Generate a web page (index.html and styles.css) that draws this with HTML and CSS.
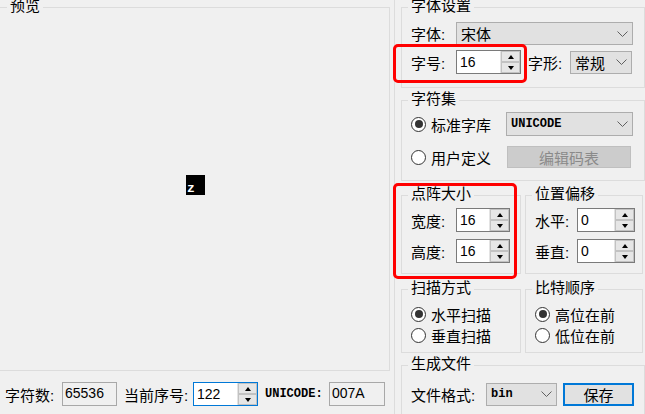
FILE: index.html
```html
<!DOCTYPE html>
<html>
<head>
	<meta charset="utf-8"/>
	<title>字模提取</title>
	<link rel="stylesheet" href="styles.css">
</head>
<body>
<div class="app">
	<div class="left">
		<fieldset class="preview">
			<legend>预览</legend>
			<div class="canvas"><span class="glyph">z</span></div>
		</fieldset>
		<div class="status">
			<span class="lbl w57">字符数:</span>
			<span class="box w55">65536</span>
			<span class="lbl w69">当前序号:</span>
			<span class="spin focus w65"><span class="val">122</span><span class="arrows"><i class="up"></i><i class="down"></i></span></span>
			<span class="lbl mono w64">UNICODE:</span>
			<span class="box w56">007A</span>
		</div>
	</div>

	<div class="right">
		<fieldset class="g1">
			<legend>字体设置</legend>
			<div class="row r1">
				<span class="lbl w45">字体:</span>
				<span class="combo w177"><span>宋体</span><svg width="11" height="6" viewBox="0 0 11 6"><path d="M0.5 0.5 L5.5 5.5 L10.5 0.5"/></svg></span>
			</div>
			<div class="row r2">
				<span class="lbl w45">字号:</span>
				<span class="spin w65"><span class="val">16</span><span class="arrows"><i class="up"></i><i class="down"></i></span></span>
				<span class="lbl w42 ml7">字形:</span>
				<span class="combo w62"><span>常规</span><svg width="11" height="6" viewBox="0 0 11 6"><path d="M0.5 0.5 L5.5 5.5 L10.5 0.5"/></svg></span>
			</div>
		</fieldset>

		<fieldset class="g2">
			<legend>字符集</legend>
			<div class="row r1">
				<label class="radio on w95"><b></b>标准字库</label>
				<span class="combo w127 h24"><span class="mono">UNICODE</span><svg width="11" height="6" viewBox="0 0 11 6"><path d="M0.5 0.5 L5.5 5.5 L10.5 0.5"/></svg></span>
			</div>
			<div class="row r2">
				<label class="radio w96"><b></b>用户定义</label>
				<span class="btn disabled w124">编辑码表</span>
			</div>
		</fieldset>

		<div class="pair p1">
			<fieldset class="g3">
				<legend>点阵大小</legend>
				<div class="row r1">
					<span class="lbl w45">宽度:</span>
					<span class="spin w54"><span class="val">16</span><span class="arrows"><i class="up"></i><i class="down"></i></span></span>
				</div>
				<div class="row r2">
					<span class="lbl w45">高度:</span>
					<span class="spin w54"><span class="val">16</span><span class="arrows"><i class="up"></i><i class="down"></i></span></span>
				</div>
			</fieldset>
			<fieldset class="g3b">
				<legend>位置偏移</legend>
				<div class="row r1">
					<span class="lbl w42">水平:</span>
					<span class="spin w58"><span class="val">0</span><span class="arrows"><i class="up"></i><i class="down"></i></span></span>
				</div>
				<div class="row r2">
					<span class="lbl w42">垂直:</span>
					<span class="spin w58"><span class="val">0</span><span class="arrows"><i class="up"></i><i class="down"></i></span></span>
				</div>
			</fieldset>
		</div>

		<div class="pair p2">
			<fieldset class="g4">
				<legend>扫描方式</legend>
				<label class="radio on r1"><b></b>水平扫描</label>
				<label class="radio r2"><b></b>垂直扫描</label>
			</fieldset>
			<fieldset class="g4b">
				<legend>比特顺序</legend>
				<label class="radio on r1"><b></b>高位在前</label>
				<label class="radio r2"><b></b>低位在前</label>
			</fieldset>
		</div>

		<fieldset class="g5">
			<legend>生成文件</legend>
			<div class="row r1">
				<span class="lbl w75">文件格式:</span>
				<span class="combo w71"><span class="mono">bin</span><svg width="11" height="6" viewBox="0 0 11 6"><path d="M0.5 0.5 L5.5 5.5 L10.5 0.5"/></svg></span>
				<span class="btn default w71 ml6">保存</span>
			</div>
		</fieldset>
	</div>

	<div class="mark mark-size"></div>
	<div class="mark mark-matrix"></div>
</div>
</body>
</html>
```

FILE: styles.css
```css
html,
body {
	margin: 0;
	padding: 0;
}

body {
	width: 645px;
	height: 414px;
	overflow: hidden;
	background: #f0f0f0;
	color: #000;
	font-family: "Liberation Sans", "Noto Sans CJK SC", sans-serif;
	font-size: 15px;
}

.app {
	position: relative;
	display: flex;
}

.left {
	width: 394px;
	height: 430px;
	border-right: 1px solid #dcdcdc;
}

.right {
	width: 244px;
	padding-left: 6px;
}

fieldset {
	box-sizing: border-box;
	margin: 0;
	padding: 0 0 0 6px;
	min-width: 0;
	border: 1px solid #dcdcdc;
}

legend {
	padding: 0 3px;
	height: 15px;
	font-family: "Noto Sans CJK SC", sans-serif;
	font-size: 15px;
	line-height: 10px;
}

/* preview */
.preview {
	margin-left: -2px;
	width: 392px;
	height: 371px;
	padding-left: 8px;
}

.canvas {
	display: flex;
	align-items: center;
	justify-content: center;
	height: 340px;
	padding-right: 5px;
}

.glyph {
	display: flex;
	align-items: flex-end;
	box-sizing: border-box;
	width: 19px;
	height: 20px;
	padding: 0 0 1px 1px;
	background: #000;
	color: #fff;
	font-family: "Liberation Mono", monospace;
	font-weight: bold;
	font-size: 13px;
	line-height: 10px;
}

.status {
	display: flex;
	align-items: center;
	height: 24px;
	margin-top: 11px;
	padding-left: 5px;
}

/* controls */
.row {
	display: flex;
	align-items: center;
	height: 24px;
	margin-left: 3px;
}

.lbl {
	white-space: nowrap;
}

.mono {
	font-family: "Liberation Mono", monospace;
	font-weight: bold;
	font-size: 12px;
}

.box {
	box-sizing: border-box;
	height: 24px;
	padding: 2px 0 0 2px;
	border: 1px solid #a8a8a8;
	font-size: 14px;
	line-height: 16px;
}

.combo {
	box-sizing: border-box;
	display: flex;
	align-items: center;
	justify-content: space-between;
	height: 23px;
	padding: 0 4px;
	border: 1px solid #adadad;
	background: #e1e1e1;
}

.combo svg path {
	fill: none;
	stroke: #606060;
	stroke-width: 1;
}

.spin {
	box-sizing: border-box;
	display: flex;
	height: 24px;
	border: 1px solid #7a7a7a;
	background: #fff;
}

.spin.focus {
	border-color: #0078d7;
}

.spin .val {
	flex: 1;
	padding-left: 3px;
	font-size: 14px;
	line-height: 22px;
}

.spin .arrows {
	display: flex;
	flex-direction: column;
	width: 19px;
	border-left: 1px solid #e3e3e3;
}

.spin i {
	flex: 1;
	display: flex;
	align-items: center;
	justify-content: center;
	background: #e6e6e6;
	border: 1px solid #c2c2c2;
}

.spin i::before {
	content: "";
	border-left: 3px solid transparent;
	border-right: 3px solid transparent;
}

.spin .up::before {
	border-bottom: 4px solid #000;
}

.spin .down::before {
	border-top: 4px solid #000;
}

.btn {
	box-sizing: border-box;
	display: flex;
	align-items: center;
	justify-content: center;
	height: 22px;
	border: 1px solid #adadad;
	background: #e1e1e1;
}

.btn.disabled {
	background: #cccccc;
	border-color: #bfbfbf;
	color: #8a8a8a;
}

.btn.default {
	height: 23px;
	border: 2px solid #0078d7;
}

.radio {
	display: flex;
	align-items: center;
	height: 20px;
	margin-left: 3px;
	white-space: nowrap;
}

.row .radio {
	margin-left: 0;
}

.radio b {
	box-sizing: border-box;
	display: flex;
	align-items: center;
	justify-content: center;
	width: 15px;
	height: 15px;
	margin-right: 5px;
	border: 1px solid #333;
	border-radius: 50%;
	background: #fff;
}

.radio.on b::before {
	content: "";
	width: 8px;
	height: 8px;
	border-radius: 50%;
	background: #333;
}

/* groups */
.g1 {
	height: 88px;
}

.g1 .r1 {
	margin-top: 7px;
	height: 23px;
}

.g1 .r2 {
	margin-top: 5px;
}

.g2 {
	height: 88px;
	margin-top: 5px;
}

.g2 .r1 {
	margin-top: 4px;
}

.g2 .r2 {
	margin-top: 9px;
}

.pair {
	display: flex;
	gap: 4px;
}

.p1 {
	margin-top: 7px;
}

.g3,
.g3b {
	height: 86px;
}

.g3 {
	width: 120px;
}

.g3b {
	width: 118px;
}

.g3 .r1,
.g3b .r1 {
	margin-top: 5px;
}

.g3 .r2,
.g3b .r2 {
	margin-top: 7px;
}

.p2 {
	margin-top: 8px;
}

.g4,
.g4b {
	height: 71px;
}

.g4 {
	width: 120px;
}

.g4b {
	width: 118px;
}

.g4 .r1,
.g4b .r1 {
	margin-top: 7px;
}

.g4 .r2,
.g4b .r2 {
	margin-top: 1px;
}

.g5 {
	height: 70px;
	margin-top: 5px;
}

.g5 .r1 {
	margin-top: 9px;
}

/* widths */
.w42 { width: 42px; }
.w45 { width: 45px; }
.w54 { width: 54px; }
.w55 { width: 55px; }
.w56 { width: 56px; }
.w57 { width: 57px; }
.w58 { width: 58px; }
.w62 { width: 62px; }
.w64 { width: 64px; }
.w65 { width: 65px; }
.w69 { width: 69px; }
.w71 { width: 71px; }
.w75 { width: 75px; }
.w95 { width: 95px; }
.w96 { width: 96px; }
.w124 { width: 124px; }
.w127 { width: 127px; }
.w177 { width: 177px; }
.h24 { height: 24px; }
.ml6 { margin-left: 6px; }
.ml7 { margin-left: 7px; }

.status .box + .lbl,
.status .spin + .lbl {
	margin-left: 7px;
}

/* red highlight frames drawn over the form */
.mark {
	position: absolute;
	box-sizing: border-box;
	border: 3px solid #f00;
	border-radius: 5px;
	pointer-events: none;
}

.mark-size {
	left: 393px;
	top: 44px;
	width: 134px;
	height: 39px;
}

.mark-matrix {
	left: 393px;
	top: 183px;
	width: 124px;
	height: 96px;
}
```
